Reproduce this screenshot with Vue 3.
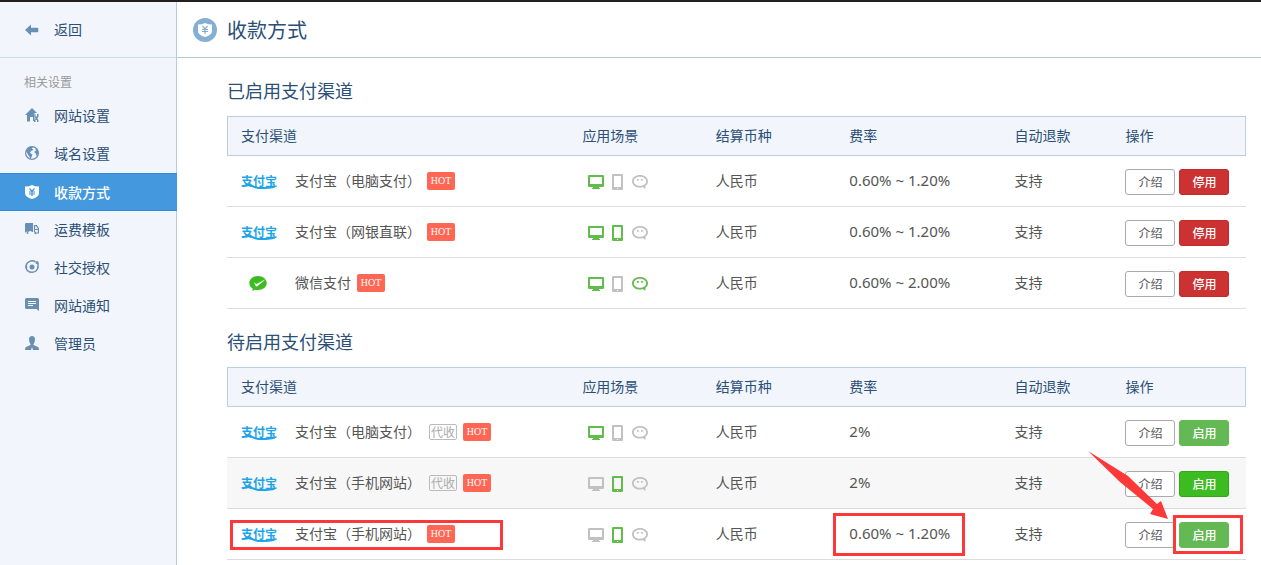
<script setup>
const menu = [
  { label: '网站设置', icon: 'home' },
  { label: '域名设置', icon: 'globe' },
  { label: '收款方式', icon: 'shield', active: true },
  { label: '运费模板', icon: 'truck' },
  { label: '社交授权', icon: 'orbit' },
  { label: '网站通知', icon: 'note' },
  { label: '管理员', icon: 'user' },
]

const columns = [
  { key: 'channel', label: '支付渠道' },
  { key: 'scene', label: '应用场景' },
  { key: 'currency', label: '结算币种' },
  { key: 'rate', label: '费率' },
  { key: 'refund', label: '自动退款' },
  { key: 'action', label: '操作' },
]

const sections = [
  {
    title: '已启用支付渠道',
    action: '停用',
    tone: 'stop',
    rows: [
      { brand: 'alipay', name: '支付宝（电脑支付）', pc: true, rate: '0.60% ~ 1.20%' },
      { brand: 'alipay', name: '支付宝（网银直联）', pc: true, phone: true, rate: '0.60% ~ 1.20%' },
      { brand: 'wechat', name: '微信支付', pc: true, chat: true, rate: '0.60% ~ 2.00%' },
    ],
  },
  {
    title: '待启用支付渠道',
    action: '启用',
    tone: 'start',
    rows: [
      { brand: 'alipay', name: '支付宝（电脑支付）', agent: true, pc: true, rate: '2%' },
      { brand: 'alipay', name: '支付宝（手机网站）', agent: true, phone: true, rate: '2%', hovered: true },
      { brand: 'alipay', name: '支付宝（手机网站）', phone: true, rate: '0.60% ~ 1.20%', marked: true },
    ],
  },
]
</script>

<template>
  <div class="app">
    <aside class="sidebar">
      <a class="back" href="#">
        <svg class="icon" viewBox="0 0 14 14" aria-hidden="true">
          <path d="M0 7 6 1.500v3.300H12.500q.8 0 .8 1v2.400q0 1-.8 1H6v3.300z" fill="currentColor" />
        </svg>
        <span>返回</span>
      </a>
      <p class="group">相关设置</p>
      <nav>
        <a v-for="item in menu" :key="item.label" href="#" class="item" :class="{ active: item.active }">
          <svg class="icon" viewBox="0 0 14 14" aria-hidden="true">
            <g v-if="item.icon === 'home'" fill="currentColor">
              <path d="M0 7 7 0l5 5H9.500v8H8V9H5v4.500H2V7z" />
              <path d="M10.500 6v2.500h1.500V6h1.500v3l-1 1v1l1 1v2H12v-2h-1.500v2H9v-2l1.500-1v-1L9.500 9V7z" />
            </g>
            <g v-else-if="item.icon === 'globe'">
              <circle cx="7" cy="7" r="6.400" fill="none" stroke="currentColor" stroke-width="1.200" />
              <path d="M1 5 4 1l4-.5-1 2L8.500 4 6 5 5 7l2.500 1.500-1 2.500-1 2L4 10 2.500 8zM10 2l3 2.500.5 3-2 2.500-1-3L9 6l2-1.500z" fill="currentColor" />
            </g>
            <g v-else-if="item.icon === 'shield'">
              <path d="M0 1.500Q4 1.500 7 0q3 1.500 7 1.500V8q0 4-7 6-7-2-7-6z" fill="currentColor" />
              <path d="M4.500 3.500 7 6.500l2.500-3M4 7h6M4 9h6M7 6.500v4.500" fill="none" stroke="#4498dd" stroke-width="1.200" />
            </g>
            <g v-else-if="item.icon === 'truck'">
              <path d="M0 2q0-1 1-1h7v9H7a2 2 0 0 0-3.500 0H3a1.500 1.500 0 0 0-2.500 1L0 10z" fill="currentColor" />
              <path d="M9.500 10V3.600h2L13.400 6.500V11H12M9.500 7.500h3.500" fill="none" stroke="currentColor" stroke-width="1.200" />
              <circle cx="2.500" cy="11" r="1" fill="currentColor" />
              <circle cx="10.500" cy="11" r="1.200" fill="currentColor" />
            </g>
            <g v-else-if="item.icon === 'orbit'">
              <path d="M10.500 1.800A6.200 6.200 0 0 0 1 6M1 8a6.200 6.200 0 0 0 12-1" fill="none" stroke="currentColor" stroke-width="1.500" />
              <circle cx="7" cy="7" r="2.500" fill="currentColor" />
              <circle cx="12" cy="2.500" r="1.500" fill="currentColor" />
              <circle cx="1.200" cy="7" r="1.200" fill="currentColor" />
              <path d="M13 3v5" stroke="currentColor" stroke-width="1.500" />
            </g>
            <g v-else-if="item.icon === 'note'">
              <path d="M1.500 0h11Q14 0 14 1.500V13l-2.500-2h-10Q0 11 0 9.500v-8Q0 0 1.500 0z" fill="currentColor" />
              <path d="M3 3.500h8M3 5.500h8M3 7.500h5" stroke="#f2f6fc" />
            </g>
            <g v-else fill="currentColor">
              <path d="M7 0q3 0 3 3.500Q10 6 8.500 8h-3Q4 6 4 3.500 4 0 7 0z" />
              <path d="M5.500 7h3v2L13 11q1 .5 1 3H8L7 11l-1 3H0q0-2.500 1-3l4.500-2z" />
            </g>
          </svg>
          <span>{{ item.label }}</span>
        </a>
      </nav>
    </aside>

    <main class="main">
      <header class="topbar">
        <svg class="badge" viewBox="0 0 24 24" aria-hidden="true">
          <circle cx="12" cy="12" r="12" fill="#84afd3" />
          <path d="M5 6.500Q9 6.500 12 5q3 1.500 7 1.500V13q0 4-7 6-7-2-7-6z" fill="#fff" />
          <path d="m9.500 8 2.500 3 2.500-3M9 11.500h6M9 13.500h6M12 11v5" fill="none" stroke="#84afd3" stroke-width="1.200" />
        </svg>
        <h1>收款方式</h1>
      </header>

      <section v-for="section in sections" :key="section.title" class="section">
        <h2>{{ section.title }}</h2>
        <table>
          <colgroup>
            <col v-for="c in columns" :key="c.key" :class="'col-' + c.key" />
          </colgroup>
          <thead>
            <tr>
              <th v-for="c in columns" :key="c.key" scope="col">{{ c.label }}</th>
            </tr>
          </thead>
          <tbody>
            <tr v-for="(row, i) in section.rows" :key="i" :class="{ hovered: row.hovered }">
              <td>
                <div class="channel">
                  <span class="brand">
                    <svg v-if="row.brand === 'alipay'" class="alipay" viewBox="0 0 36 20" aria-label="支付宝">
                      <text x="0" y="15">支付宝</text>
                      <path d="M0 14q5 1 9-2 2 3 9 4 10 .5 18-1.500-1 3-11 3.500Q13 18.500 8.500 14.500 5 17 0 14z" />
                    </svg>
                    <svg v-else class="wechat" viewBox="0 0 18 16" aria-label="微信支付">
                      <path d="M9 1c5 0 8.700 3 8.700 7S14 15 9 15q-1.500 0-3-.3L3.500 16 3.700 13.500Q.3 11.500.3 8C.3 4 4 1 9 1z" fill="#3cbc20" />
                      <path d="M5 7.500 7.500 9 17 4 8 11.500 6.800 11.300z" fill="#fff" />
                    </svg>
                  </span>
                  <span class="name">{{ row.name }}</span>
                  <span v-if="row.agent" class="agent">代收</span>
                  <span class="hot">HOT</span>
                </div>
                <span v-if="row.marked" class="mark mark-channel"></span>
              </td>
              <td>
                <div class="scenes">
                  <svg class="scene wide" :class="{ on: row.pc }" viewBox="0 0 16 16" aria-hidden="true">
                    <path d="M1 1h14q1 0 1 1v10q0 1-1 1h-4v1h1v1H4v-1h1v-1H1q-1 0-1-1V2q0-1 1-1zm1 2v7h12V3z" fill-rule="evenodd" />
                  </svg>
                  <svg class="scene" :class="{ on: row.phone }" viewBox="0 0 12 16" aria-hidden="true">
                    <path d="M1 0h9q1 0 1 1v14q0 1-1 1H1q-1 0-1-1V1q0-1 1-1zm1 2v11h7V2zm3 12v1h1v-1z" fill-rule="evenodd" />
                  </svg>
                  <svg class="scene wide" :class="{ on: row.chat }" viewBox="0 0 16 16" aria-hidden="true">
                    <path d="M8 1c4.500 0 8 2.600 8 6.200 0 2-.9 3.400-2.500 4.500l-.2 3.300-2.500-2Q9.500 13.600 8 13.600C3.500 13.600 0 11 0 7.200S3.500 1 8 1zm0 1.800c-3.500 0-6.200 1.900-6.200 4.500S4.500 11.800 8 11.800s6.200-1.900 6.200-4.500S11.500 2.800 8 2.800zM5 5h1.800v1.800H5zm4 0h1.800v1.800H9z" fill-rule="evenodd" />
                  </svg>
                </div>
              </td>
              <td>人民币</td>
              <td class="rate">{{ row.rate }}<span v-if="row.marked" class="mark mark-rate"></span></td>
              <td>支持</td>
              <td>
                <div class="actions">
                  <button type="button" class="btn">介绍</button>
                  <button type="button" class="btn solid" :class="section.tone">{{ section.action }}</button>
                </div>
                <template v-if="row.marked">
                  <span class="mark mark-action"></span>
                  <svg class="arrow" viewBox="0 0 80 68" aria-hidden="true">
                    <path d="M0 0 40 25 69 53 73 50 80 68 62 63 65 58 32 31z" fill="#fd3838" />
                  </svg>
                </template>
              </td>
            </tr>
          </tbody>
        </table>
      </section>
    </main>
  </div>
</template>

<style>
body {
  margin: 0;
  overflow: hidden;
  background: #fff;
}
</style>

<style scoped>
.app {
  display: flex;
  box-sizing: border-box;
  min-height: 100vh;
  border-top: 2px solid #231f20;
  font-family: "Noto Sans CJK SC", sans-serif;
  font-size: 14px;
  line-height: 20px;
  color: #555;
}
.sidebar {
  flex: none;
  width: 176px;
  border-right: 1px solid #b5cde2;
  background: #f2f6fc;
  color: #2b4f76;
}
.back,
.item {
  display: flex;
  align-items: center;
  gap: 15px;
  padding-left: 25px;
  color: inherit;
  text-decoration: none;
}
.back {
  height: 55px;
  border-bottom: 1px solid #cbdde6;
}
.back span {
  padding-bottom: 2px;
}
.icon {
  width: 14px;
  height: 14px;
  color: #6a8fb5;
}
.group {
  margin: 0;
  padding: 14px 24px 5px;
  font-size: 12px;
  color: #999;
}
.item {
  box-sizing: border-box;
  height: 38px;
  padding-bottom: 2px;
}
.item.active {
  margin-right: -1px;
  padding-bottom: 0;
  border-top: 1px solid #2e8ae0;
  border-bottom: 1px solid #2e8ae0;
  background: #4498dd;
  color: #fff;
  font-weight: 500;
}
.item.active .icon {
  color: #fff;
}
.main {
  flex: 1;
  min-width: 0;
}
.topbar {
  display: flex;
  align-items: center;
  gap: 10px;
  height: 55px;
  padding: 0 16px;
  border-bottom: 1px solid #b7c9d9;
}
.badge {
  width: 24px;
  height: 24px;
}
h1,
h2 {
  margin: 0;
  font-weight: 400;
  color: #2b4f76;
}
h1 {
  font-size: 20px;
  line-height: 28px;
}
h2 {
  padding: 19px 0 13px;
  font-size: 18px;
  line-height: 26px;
}
.section {
  padding: 0 15px 0 50px;
}
table {
  width: 100%;
  table-layout: fixed;
  border-spacing: 0;
}
.col-channel { width: 33.5%; }
.col-scene { width: 13.1%; }
.col-currency { width: 13.1%; }
.col-rate { width: 16.2%; }
.col-refund { width: 10.9%; }
.col-action { width: 13.2%; }
th,
td {
  box-sizing: border-box;
  padding: 0 0 2px 14px;
  text-align: left;
}
th {
  height: 40px;
  border: solid #bccfe2;
  border-width: 1px 0;
  background: #f2f6fc;
  color: #2b4f76;
  font-weight: 400;
}
th:first-child {
  padding-left: 13px;
  border-left-width: 1px;
}
th:last-child {
  border-right-width: 1px;
}
td {
  position: relative;
  height: 51px;
  border-bottom: 1px solid #ddd;
}
.hovered td {
  background: #f7f7f7;
}
.channel,
.scenes,
.actions {
  display: flex;
  align-items: center;
}
.channel {
  gap: 6px;
  padding-top: 2px;
}
.name {
  padding-bottom: 2px;
}
.brand {
  display: flex;
  width: 48px;
}
.alipay {
  width: 36px;
  height: 20px;
  overflow: visible;
  fill: #1ea5e8;
  font-size: 12px;
  font-weight: 700;
}
.wechat {
  width: 18px;
  height: 16px;
  margin-left: 8px;
}
.agent,
.hot {
  box-sizing: border-box;
  width: 28px;
  border-radius: 2px;
  text-align: center;
}
.agent {
  height: 16px;
  margin-left: 2px;
  border: 1px solid #bbb;
  font-size: 12px;
  line-height: 14px;
  color: #aaa;
}
.hot {
  height: 18px;
  background: #ff6653;
  color: #fff;
  font-family: "Liberation Serif", serif;
  font-size: 10px;
  line-height: 18px;
}
.scenes {
  gap: 8px;
  padding-top: 4px;
  padding-left: 6px;
}
.scene {
  width: 12px;
  height: 16px;
  fill: #c1c1c1;
}
.scene.wide {
  width: 16px;
}
.scene.on {
  fill: #62bc4b;
}
.rate {
  font-family: "Noto Sans", sans-serif;
  font-size: 15px;
}
.actions {
  gap: 4px;
  padding-top: 3px;
}
.btn {
  width: 50px;
  height: 26px;
  padding: 0;
  border: 1px solid #aaa;
  border-radius: 3px;
  background: #fff;
  color: #555;
  font-family: inherit;
  font-size: 12px;
  line-height: 22px;
}
.solid {
  color: #fff;
  font-weight: 500;
}
.stop {
  border-color: #c12b2b;
  background: #cc3232;
}
.start {
  border-color: #65b955;
  background: #65b955;
}
.hovered .start {
  border-color: #31a818;
  background: #3cbc20;
}
.mark {
  position: absolute;
  box-sizing: border-box;
  border: 3px solid #fd3838;
}
.mark-channel {
  top: 11px;
  left: 3px;
  width: 273px;
  height: 30px;
}
.mark-rate {
  top: 4px;
  left: -2px;
  width: 132px;
  height: 43px;
}
.mark-action {
  top: 6px;
  left: 62px;
  width: 70px;
  height: 39px;
}
.arrow {
  position: absolute;
  top: -58px;
  left: -23px;
  width: 80px;
  height: 68px;
}
</style>
